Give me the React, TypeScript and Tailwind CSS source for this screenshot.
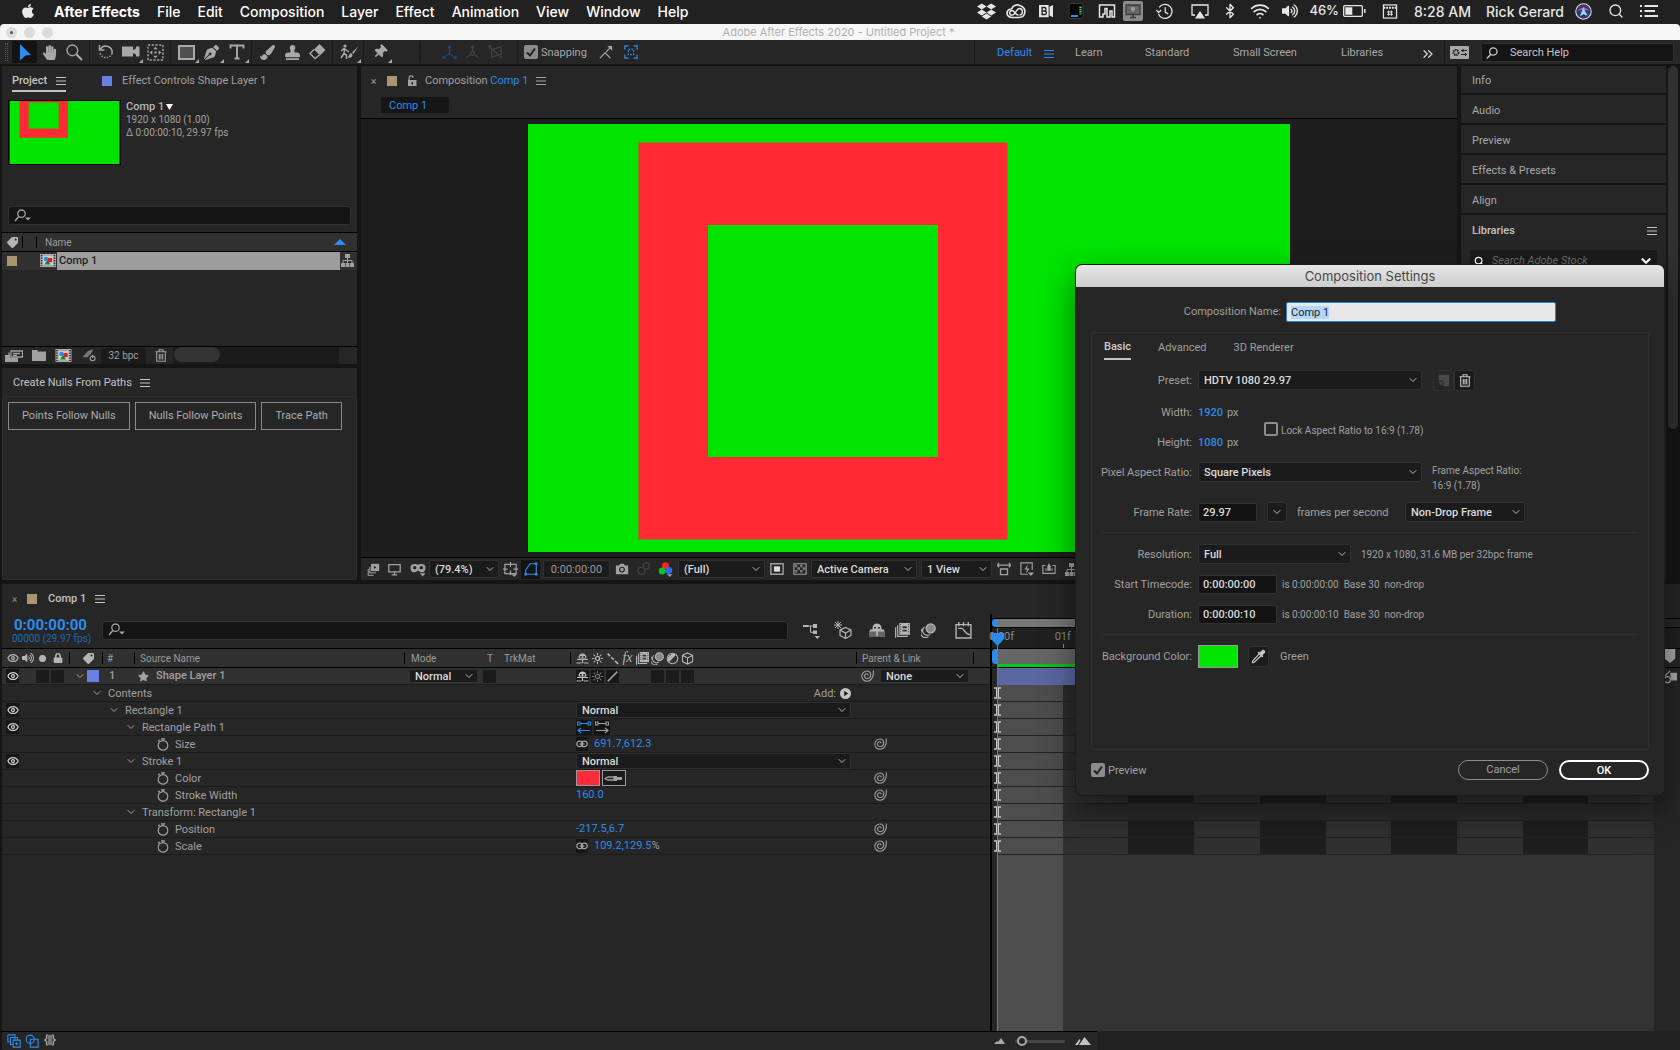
import { useEffect, useRef, type ReactNode } from "react";
import clsx from "clsx";
import { Bluetooth, ChevronDown, ChevronsRight, Eye, Search, Wifi } from "lucide-react";
import {
  FaApple,
  FaDropbox,
  FaHandPaper,
  FaLock,
  FaPaintBrush,
  FaPenNib,
  FaStamp,
  FaStar,
  FaTag,
  FaThumbtack,
  FaVolumeUp,
} from "react-icons/fa";

const UI_FONT = "font-['Roboto','Noto_Sans',sans-serif]";
const SYSTEM_FONT = "font-['Inter','Liberation_Sans',sans-serif]";

type IconProps = { className?: string };

function Icon({ className, children, box = "0 0 16 16" }: { className?: string; children: ReactNode; box?: string }) {
  return (
    <svg
      viewBox={box}
      fill="none"
      stroke="currentColor"
      strokeWidth="1.3"
      aria-hidden="true"
      className={clsx("shrink-0", className ?? "size-4")}
    >
      {children}
    </svg>
  );
}

const MenuLines = ({ className = "size-[10px]" }: IconProps) => (
  <Icon className={className} box="0 0 10 10">
    <path d="M0 1.5h10M0 5h10M0 8.5h10" strokeWidth="1.1" />
  </Icon>
);

const SearchDrop = () => (
  <Icon className="w-[18px] h-[14px]" box="0 0 18 14">
    <circle cx="7.5" cy="4.7" r="3.7" />
    <path d="M4.8 7.6 1 12" strokeWidth="1.6" />
    <path d="M11 8.5h6l-3 3z" fill="currentColor" stroke="none" />
  </Icon>
);

const SearchLeft = () => (
  <Icon className="size-3" box="0 0 12 12">
    <circle cx="7.3" cy="4.5" r="3.7" />
    <path d="M4.8 7.2 1 11.4" strokeWidth="1.5" />
  </Icon>
);

const Spiral = () => (
  <Icon className="h-3 w-[13px]" box="0 0 13 12">
    <path
      d="M12.200.5c.8 5.500-1.700 10.700-6.200 10.700C3 11.200.8 9 .8 6.200.8 3.300 3 1 5.900 1c2.400 0 3.900 1.600 3.800 3.700C9.600 7 8.200 8.500 6.300 8.500 4.700 8.500 3.600 7.500 3.600 6.100c0-1.300.9-2.300 2-2.300.9 0 1.500.6 1.300 1.600"
      strokeWidth="1.1"
    />
  </Icon>
);

const Stopwatch = () => (
  <Icon className="w-3 h-[13px]" box="0 0 12 13">
    <circle cx="6" cy="7.4" r="4.8" strokeWidth="1.2" />
    <path d="M6 2.8V1M4 .8h4M1.2 3.2l1.400-1.400" strokeWidth="1.3" />
  </Icon>
);

const Chain = () => (
  <Icon className="w-3 h-[8px]" box="0 0 12 8">
    <rect x=".8" y="1.200" width="5.800" height="5.400" rx="2.700" />
    <rect x="5.400" y="1.200" width="5.800" height="5.400" rx="2.700" />
    <path d="M3.500 4h5" strokeWidth="1.2" />
  </Icon>
);

const Shy = ({ className = "size-[13px]" }: IconProps) => (
  <Icon className={className} box="0 0 13 13">
    <path d="M2.500 6.500C2.500 3 4 1.500 6.500 1.500s4 1.500 4 5z" fill="currentColor" stroke="none" />
    <path d="M4 4h1.700v1.700H4zM7.300 4H9v1.700H7.300z" fill="#222" stroke="none" />
    <path d="M1 7.500h11M6.500 7v4M.5 11h5M7.500 11h5" strokeWidth="1.200" />
  </Icon>
);

const Sun = () => (
  <Icon className="size-[13px]" box="0 0 14 14">
    <circle cx="7" cy="7" r="2.2" />
    <path d="M7 1v2.500M7 10.500V13M1 7h2.500M10.500 7H13M2.800 2.800l1.700 1.700M9.500 9.500l1.700 1.700M11.200 2.800 9.500 4.500M4.500 9.500l-1.700 1.700" strokeWidth="1.1" />
  </Icon>
);

const Blend = ({ className = "size-[13px]" }: IconProps) => (
  <Icon className={className} box="0 0 14 14">
    <rect x="4" y="0" width="10" height="11" fill="currentColor" stroke="none" />
    <path d="M2.500 2v10.500h9.500M.6 4v9.800" strokeWidth="1.1" />
    <path d="M7 3h4v1.800H7zM7 6.200h4V8H7z" fill="#333" stroke="none" />
    <path d="M5.300 1v9M12.700 1v9" stroke="#333" strokeDasharray="1 1.200" strokeWidth=".8" />
  </Icon>
);

const MotionBlur = ({ className = "size-[13px]" }: IconProps) => (
  <Icon className={className} box="0 0 14 14">
    <circle cx="9" cy="5" r="4.200" fill="#888" />
    <path d="M3.300 3.600a4.400 4.400 0 0 0 5.400 7M1.500 5.600a4.400 4.400 0 0 0 5.400 7.200" strokeWidth="1.1" />
  </Icon>
);

const Cube = ({ className = "size-[13px]" }: IconProps) => (
  <Icon className={className} box="0 0 14 14">
    <path d="M7 1l5.500 2.700v6.600L7 13l-5.500-2.700V3.700zM1.500 3.700 7 6.500l5.500-2.800M7 6.500V13" strokeWidth="1.1" />
  </Icon>
);

const Flowchart = ({ className = "size-[13px]" }: IconProps) => (
  <Icon className={className} box="0 0 13 13">
    <path d="M4 0h5v4H4zM0 9h4v4H0zM4.600 9h3.800v4H4.600zM9 9h4v4H9z" fill="currentColor" stroke="none" />
    <path d="M6.500 4v5M2 9V6.500h9V9" strokeWidth="1" />
  </Icon>
);

const CompIcon = ({ className = "w-4 h-[13px]" }: IconProps) => (
  <Icon className={className} box="0 0 16 13">
    <rect width="16" height="13" fill="#a9a9a9" stroke="none" />
    <path d="M1.500 1v11M14.500 1v11" stroke="#222" strokeWidth="1.500" strokeDasharray="1.300 1.200" />
    <rect x="3" y="2" width="10" height="9" fill="#ccc" stroke="none" />
    <circle cx="6" cy="5" r="2.300" fill="#2d8ceb" stroke="none" />
    <rect x="8" y="4" width="4.200" height="4.200" fill="#e02020" stroke="none" />
    <path d="M4.500 10.500 7.500 6l3 4.500z" fill="#0a8a20" stroke="none" />
  </Icon>
);

const Trash = () => (
  <Icon className="w-3 h-[13px]" box="0 0 12 13">
    <path d="M.5 2.800h11M4 2.500V.8h4v1.700M1.700 3v9.300h8.600V3M4.300 5v5.500M6 5v5.500M7.700 5v5.500" strokeWidth="1.100" />
  </Icon>
);

const Padlock = () => (
  <Icon className="w-[10px] h-3" box="0 0 10 12">
    <path d="M1 5h8.500v6H1z" fill="currentColor" stroke="none" />
    <path d="M2.200 5V2.700a1.900 1.900 0 0 1 3.800 0" strokeWidth="1.300" />
    <path d="M5.200 7v2.500" stroke="#222" strokeWidth="1.500" />
  </Icon>
);

function Select({ label, value, className }: { label: string; value: string; className?: string }) {
  return (
    <span className={clsx("relative inline-flex shrink-0 text-[#dadada] font-medium", className)}>
      <select
        aria-label={label}
        className="w-full appearance-none rounded-xs border border-[#303030] bg-[#1b1b1b] pl-[5px] pr-4 leading-none outline-none"
      >
        <option>{value}</option>
      </select>
      <ChevronDown className="pointer-events-none absolute right-[3px] top-1/2 size-3 -translate-y-1/2 text-[#b8b8b8]" />
    </span>
  );
}

function CheckBox({ id, label, checked }: { id: string; label: string; checked?: boolean }) {
  return (
    <span className="flex items-center gap-[3px]">
      <span className="relative flex">
        <input
          id={id}
          type="checkbox"
          defaultChecked={checked}
          className="peer size-[14px] appearance-none rounded-xs border-2 border-[#8c8c8c] checked:bg-[#8c8c8c]"
        />
        <Icon className="pointer-events-none absolute inset-0 size-[14px] text-[#222] opacity-0 peer-checked:opacity-100" box="0 0 14 14">
          <path d="M3 7.500 6 10.500 11 3.500" strokeWidth="2" />
        </Icon>
      </span>
      <label htmlFor={id} className="pt-0.5">{label}</label>
    </span>
  );
}

const menus = ["File", "Edit", "Composition", "Layer", "Effect", "Animation", "View", "Window", "Help"];

function MenuBar() {
  return (
    <header className={clsx(SYSTEM_FONT, "flex h-6 shrink-0 items-center bg-[#212121] pb-0.5 text-[14px] font-medium text-white")}>
      <FaApple className="ml-5 size-[16px] text-[#e8e8e8]" />
      <nav className="flex items-center gap-[17px] pl-[18px]">
        <a href="#app" className="font-bold">After Effects</a>
        {menus.map((m) => (
          <a key={m} href="#menu">{m}</a>
        ))}
      </nav>
      <div className="ml-auto flex items-center text-[#e6e6e6]">
        <span className="flex w-[30px] justify-center"><FaDropbox className="size-[19px]" /></span>
        <span className="flex w-[30px] justify-center">
          <Icon className="h-[15px] w-5" box="0 0 20 15">
            <path d="M5.500 5C7 1 11 .3 14 1.500c3.500 1.300 5.200 4.200 4.800 7-.4 3-2.800 5-5.800 5H6C3 13.500 1 11.500 1 9.200 1 6.800 3 5 5.500 5" strokeWidth="1.700" />
            <path d="M12.500 11c-3.500 0-4-4.500-6.500-4.500-1.400 0-2.300 1.100-2.300 2.400S4.600 11.200 6 11.200c3.500 0 4-6.700 7.500-6.700 1.700 0 2.900 1.400 2.900 3.200S15.200 11 13.500 11" strokeWidth="1.400" />
          </Icon>
        </span>
        <span className="flex w-[30px] justify-center">
          <Icon className="h-3.5 w-4">
            <path d="M0 1h11v14H0zM12 3l4-2v14l-4-2z" fill="#e6e6e6" stroke="none" />
            <path d="M3.500 4h2.500a2 2 0 0 1 0 4H3.500zm0 4h3a2 2 0 0 1 0 4h-3z" stroke="#222" strokeWidth="1.500" />
          </Icon>
        </span>
        <span className="flex w-[30px] justify-center">
          <Icon className="size-4">
            <rect x="1" y=".5" width="14" height="15" rx="2" fill="#050505" stroke="#444" strokeWidth=".8" />
            <path d="M12.500 3.500v8" stroke="#4cd964" strokeWidth="2.200" strokeDasharray="1.500 .8" />
            <path d="M3 13h7" stroke="#2d8ceb" strokeWidth="2" />
          </Icon>
        </span>
        <span className="flex w-[32px] justify-center">
          <Icon className="h-4 w-[18px]" box="0 0 18 16">
            <path d="M5 14H1.500V2h15v12H14V8h-2v6H9V5.500H7V11H5z" strokeWidth="1.500" />
          </Icon>
        </span>
        <span className="flex w-5 justify-center rounded-xs bg-[#8b8b8b] py-0.5">
          <Icon className="size-4 text-[#3c3c3c]">
            <path d="M1 2h14v9.500H1z" fill="#666" />
            <path d="M8 11.500V14M5 14.500h6" />
            <path d="M6 4h4v3l-2 2-2-2z" fill="#999" stroke="none" />
          </Icon>
        </span>
        <span className="flex w-[42px] justify-center">
          <Icon className="size-[17px]">
            <path d="M3 4.200A6.600 6.600 0 1 1 2.200 10M.3 6.500l2 2.300L5 6.800M8.700 4v4.500l2.800 1.800" strokeWidth="1.200" />
          </Icon>
        </span>
        <span className="flex w-[30px] justify-center">
          <Icon className="h-[15px] w-[18px]" box="0 0 18 15">
            <path d="M4 11H1V1h16v10h-3" />
            <path d="M9 7l5 7.500H4z" fill="currentColor" stroke="none" />
          </Icon>
        </span>
        <span className="flex w-[30px] justify-center"><Bluetooth className="size-[16px]" /></span>
        <span className="flex w-[30px] justify-center"><Wifi className="size-[20px]" /></span>
        <span className="flex w-[30px] justify-center"><FaVolumeUp className="size-[16px]" /></span>
        <span className="ml-1 text-[13px]">46%</span>
        <Icon className="ml-1 h-3 w-[23px]" box="0 0 23 12">
          <rect x=".7" y=".7" width="18.600" height="10.600" rx="1" />
          <path d="M2.300 2.300h7v7.400h-7zM21 4h1.500v4H21z" fill="currentColor" stroke="none" />
        </Icon>
        <Icon className="ml-4 h-[15px] w-4">
          <rect x="1" y="1" width="14" height="14" />
          <path d="M1 4h14" strokeWidth="2" strokeDasharray="2 1" />
          <path d="M6.500 12.500V7M9.500 12.500V7M5 8.500h6M5 11h6" strokeWidth="1" />
        </Icon>
        <span className="ml-4">8:28 AM</span>
        <span className="ml-[15px]">Rick Gerard</span>
        <Icon className="ml-[11px] size-[17px]">
          <circle cx="8" cy="8" r="7.300" fill="#2b3a78" stroke="#ddd" strokeWidth="1" />
          <path d="M3 7.500C4 3 12 3 13 7.500 10 6 6 6 3 7.500z" fill="#e0468c" stroke="none" />
          <path d="M8 3.500 9.500 7.500 12 12 8 10.500 4.500 12.500 6.500 7.500z" fill="#8fd8f0" stroke="none" />
        </Icon>
        <Search className="ml-4 size-4" />
        <Icon className="ml-[16px] mr-[22px] h-3.5 w-[18px]" box="0 0 18 14">
          <path d="M4.500 2H18M4.500 7H15M4.500 12H18M0 2h2M0 7h2M0 12h2" strokeWidth="1.900" />
        </Icon>
      </div>
    </header>
  );
}

function TitleBar() {
  return (
    <div className={clsx(SYSTEM_FONT, "flex h-4 shrink-0 items-center rounded-t-sm bg-[#f6f6f6] px-1.5 text-[#b0b0b0]")}>
      <div className="flex gap-[7px]">
        <span className="flex size-[11px] items-center justify-center rounded-full bg-[#dcdcdc]">
          <span className="size-[3px] rounded-full bg-[#555]" />
        </span>
        <span className="size-[11px] rounded-full bg-[#dcdcdc]" />
        <span className="size-[11px] rounded-full bg-[#dcdcdc]" />
      </div>
      <h1 className="flex-1 pr-[50px] text-center text-[11px] leading-4">Adobe After Effects 2020 - Untitled Project *</h1>
    </div>
  );
}

const Corner = () => (
  <Icon className="absolute bottom-0 right-0 size-1" box="0 0 4 4">
    <path d="M4 0v4H0z" fill="currentColor" stroke="none" />
  </Icon>
);

function Tool({ label, corner, active, children }: { label: string; corner?: boolean; active?: boolean; children: ReactNode }) {
  return (
    <button
      aria-label={label}
      className={clsx("relative flex h-[22px] w-[25px] items-center justify-center", active && "rounded-xs bg-[#131313] text-[#2d8ceb]")}
    >
      {children}
      {corner && <Corner />}
    </button>
  );
}

const Sep = () => <span className="ml-[2px] mr-[3px] h-[22px] w-px bg-[#1c1c1c]" />;

function Toolbar() {
  return (
    <div className="flex h-[26px] shrink-0 items-center border-b-2 border-[#141414] bg-[#262626] text-[11px] text-[#a8a8a8]">
      <span className="ml-[5px] mr-[4px] h-[18px] w-[3px] border-x border-dotted border-[#555]" />
      <Tool label="Selection" active>
        <Icon className="h-[19px] w-3.5" box="0 0 14 19"><path d="M2 1l11 11-5.500.5L2 17.500z" fill="currentColor" stroke="none" /></Icon>
      </Tool>
      <Tool label="Hand"><FaHandPaper className="size-[15px]" /></Tool>
      <Tool label="Zoom"><Icon className="size-[17px]"><circle cx="6" cy="6" r="5" /><path d="M9.700 9.700 15 15" strokeWidth="2" /></Icon></Tool>
      <Sep />
      <Tool label="Rotation">
        <Icon className="size-4"><path d="M2.500 5A6.300 6.300 0 0 1 14 9.500" strokeWidth="1.500" /><path d="M14 9.500A6.300 6.300 0 0 1 2 9" strokeWidth="1.500" strokeDasharray="1.300 1.500" /><path d="M1.500 1v5h5" strokeWidth="1.500" /></Icon>
      </Tool>
      <Tool label="Camera" corner>
        <Icon className="h-4 w-[18px]" box="0 0 18 16"><path d="M0 2.500h11v10H0zM11 6l3-1.500v-2h3.500v10H14v-2L11 9z" fill="currentColor" stroke="none" /></Icon>
      </Tool>
      <Tool label="Pan behind">
        <Icon className="size-[17px]"><rect x="1" y="1" width="14" height="14" strokeDasharray="2 1.500" /><path d="M8 2.500 10 5H6zM8 13.500 10 11H6zM2.500 8 5 6v4zM13.500 8 11 6v4zM7 7h2v2H7z" fill="currentColor" stroke="none" /></Icon>
      </Tool>
      <Sep />
      <Tool label="Rectangle" corner><span className="h-[15px] w-[17px] border-2 border-[#a8a8a8] bg-[#505050]" /></Tool>
      <Tool label="Pen" corner><FaPenNib className="size-[15px]" /></Tool>
      <Tool label="Type" corner><Icon className="size-4"><path d="M1.500 4.500v-3h13v3M8 1.500v13M5.500 14.500h5" strokeWidth="1.900" /></Icon></Tool>
      <Sep />
      <Tool label="Brush"><FaPaintBrush className="size-[15px]" /></Tool>
      <Tool label="Clone stamp"><FaStamp className="size-[15px]" /></Tool>
      <Tool label="Eraser">
        <Icon className="h-4 w-[17px]" box="0 0 17 16"><path d="M10.500 0 16.500 6 11 11.500 5 5.500z" fill="currentColor" stroke="none" /><path d="M5 5.500 1 9.500l5 5L10.500 11" strokeWidth="1.400" /></Icon>
      </Tool>
      <Sep />
      <Tool label="Roto brush" corner>
        <Icon className="h-4 w-5" box="0 0 20 16"><circle cx="6" cy="2" r="1.600" fill="currentColor" stroke="none" /><path d="M2 7l3-2.500L8 6.500 10 8M5.500 5 5 9.500 7.500 11v4M5 9.500 2 14" strokeWidth="1.500" /><path d="M19.500 2 13 8.500l1.500 1.500zM12 9c-2 .5-1.500 3-3.500 4.500 3 .8 5.500-.5 5-3z" fill="currentColor" stroke="none" /></Icon>
      </Tool>
      <Sep />
      <Tool label="Puppet pin" corner><FaThumbtack className="size-[14px] rotate-45" /></Tool>
      <span className="ml-[27px] mr-[21px] h-[22px] w-0.5 bg-[#1c1c1c]" />
      <div className="flex items-center gap-2 text-[#444]">
        <span className="text-[#1f4a7a]"><Icon className="size-[15px]"><path d="M8 9V1M8 9 1 14M8 9l7 5M6.500 3 8 1l1.500 2M1 11.500V14h2.500M15 11.500V14h-2.500" /></Icon></span>
        <Icon className="size-[15px]"><circle cx="8" cy="9" r="2" /><path d="M8 7V1M6 10 1 14M10 10l5 4M6.500 3 8 1l1.500 2" /></Icon>
        <Icon className="size-[15px]"><path d="M1 1l14 13M1 1v3M1 1h3M14 2v8L4 13V5z" /></Icon>
      </div>
      <span className="ml-3.5 mr-[6px] h-[22px] w-px bg-[#1c1c1c]" />
      <CheckBox id="snapping" label="Snapping" checked />
      <Icon className="ml-3 size-[14px]"><path d="M1 15l6-6 6 6M8 8l5-5" /><path d="M9.500 1H15v5.500z" fill="currentColor" stroke="none" /></Icon>
      <Icon className="ml-[11px] size-[14px] text-[#2d8ceb]"><path d="M1 5V1h4M11 1h4v4M15 11v4h-4M5 15H1v-4" strokeWidth="1.500" /><rect x="5" y="5" width="6" height="6" strokeDasharray="2 1.500" /></Icon>
      <nav className="ml-auto flex h-full items-center border-l border-[#1a1a1a] pl-[22px] pt-[3px]">
        <a href="#default" className="w-[47px] text-[#2d8ceb]">Default</a>
        <span className="w-[31px] text-[#2d8ceb]"><MenuLines /></span>
        <a href="#learn" className="w-[70px]">Learn</a>
        <a href="#standard" className="w-[88px]">Standard</a>
        <a href="#small" className="w-[108px]">Small Screen</a>
        <a href="#libraries" className="w-[79px]">Libraries</a>
        <ChevronsRight className="size-4 text-[#d0d0d0]" />
      </nav>
      <span className="ml-2 h-[22px] w-px bg-[#1a1a1a]" />
      <Icon className="ml-[5px] h-[13px] w-[19px]" box="0 0 19 13">
        <rect width="19" height="13" rx="1" fill="#a8a8a8" stroke="none" />
        <circle cx="6" cy="6.500" r="2.500" stroke="#222" strokeWidth="2" strokeDasharray="1.500 .6" />
        <path d="M11 4.500h6M11 8.500h6M13 3v3M15.500 7v3" stroke="#222" strokeWidth="1.200" />
      </Icon>
      <label className="ml-[12px] mr-1.5 flex h-[19px] w-[193px] items-center gap-3 rounded-xs border border-[#303030] bg-[#141414] pl-1 pt-0.5 text-[#c4c4c4]">
        <SearchLeft />
        <input aria-label="Search Help" placeholder="Search Help" className="w-full min-w-0 bg-transparent outline-none placeholder:text-[#c4c4c4]" />
      </label>
    </div>
  );
}

function ProjectPanel() {
  return (
    <section className="flex h-[298px] flex-col bg-[#262626]">
      <div className="flex h-[26px] items-stretch pl-2.5">
        <button className="flex items-center gap-[9px] border-b-2 border-[#c4c4c4] pt-1.5 font-medium text-[#c4c4c4]">
          Project <MenuLines />
        </button>
        <button className="ml-9 flex items-center gap-[10px] pt-1">
          <span className="size-[10px] bg-[#6b7fe3]" /> Effect Controls Shape Layer 1
        </button>
      </div>
      <div className="flex gap-[5px] pl-1.5 pt-2">
        <svg viewBox="0 0 113 65" className="h-[65px] w-[113px] border border-black" aria-label="Comp 1 thumbnail">
          <rect width="113" height="65" fill="#00e400" />
          <path d="M10 0h50v38H10z" fill="#ff2a34" />
          <path d="M19.500 1.500h31v27h-31z" fill="#00e400" />
        </svg>
        <div className="text-[10px] leading-[13px]">
          <p className="flex items-center gap-0.5 text-[11px] font-medium text-[#b8b8b8]">
            Comp 1
            <Icon className="h-1.5 w-[7px] text-white" box="0 0 7 6"><path d="M0 0h7L3.500 6z" fill="currentColor" stroke="none" /></Icon>
          </p>
          <p>1920 x 1080 (1.00)</p>
          <p>Δ 0:00:00:10, 29.97 fps</p>
        </div>
      </div>
      <label className="mx-1.5 mt-[41px] flex h-[19px] items-center rounded-xs border border-[#303030] bg-[#141414] pl-[5px]">
        <SearchDrop />
        <input aria-label="Search project" className="w-full min-w-0 bg-transparent outline-none" />
      </label>
      <table className="mt-[7px] w-full table-fixed border-t border-black">
        <colgroup>
          <col className="w-[20px]" />
          <col className="w-[35px]" />
          <col />
          <col className="w-[17px]" />
        </colgroup>
        <thead className="bg-[#303030] text-[10px] text-[#9a9a9a]">
          <tr className="h-[19px] border-b border-black">
            <th className="pl-[5px]"><FaTag className="size-[11px] -scale-x-100 text-[#b5b5b5]" /></th>
            <th><span className="block h-3 w-[15px] border-x border-black" /></th>
            <th className="text-left font-normal"><span className="-ml-3">Name</span></th>
            <th><Icon className="-ml-1.5 h-1.5 w-3" box="0 0 12 6"><path d="M6 0l6 6H0z" fill="#2d8ceb" stroke="none" /></Icon></th>
          </tr>
        </thead>
        <tbody>
          <tr className="h-[18px]">
            <td className="bg-[#303030] pl-[5px]"><span className="block size-[10px] bg-[#a99572]" /></td>
            <td className="bg-[#303030] pl-[18px]"><CompIcon /></td>
            <td className="bg-[#9d9d9d] pl-0.5 pt-px font-medium text-[#222]">Comp 1</td>
            <td className="bg-[#303030] pl-px"><Flowchart /></td>
          </tr>
        </tbody>
      </table>
      <div className="mt-auto flex h-[18px] items-center border-t border-black">
        <div className="flex h-full w-[171px] items-center gap-[9px] bg-[#262626] pl-[3px]">
          <Icon className="h-3 w-[18px]" box="0 0 18 12"><path d="M6 1h11.500v6H6z" /><path d="M8 3.500h7M8 5.500h4" /><path d="M0 5h5v3.500h8V12H0z" fill="currentColor" stroke="none" /><path d="M4 2.500v6h9" /></Icon>
          <Icon className="h-[11px] w-3.5" box="0 0 14 11"><path d="M0 0h5l1 1.500h8V11H0z" fill="currentColor" stroke="none" /></Icon>
          <CompIcon className="h-[13px] w-[17px]" />
          <Icon className="h-[13px] w-4"><path d="M0 10C5 3 9 0 13 1c-1 3-3 6-7 9zM1 13l4-3" fill="#777" stroke="none" /><circle cx="12.500" cy="11.500" r="3" /><path d="M12.500 7v4" /></Icon>
          <button className="-ml-[5px] h-4 w-[45px] rounded-xs bg-[#1b1b1b] text-[10px]">32 bpc</button>
          <Trash />
        </div>
        <div className="mr-[18px] h-full flex-1 bg-[#1b1b1b]">
          <span className="ml-px block h-[15px] w-[46px] rounded-full bg-[#343434]" />
        </div>
      </div>
    </section>
  );
}

function NullsPanel() {
  return (
    <section className="flex flex-1 flex-col bg-[#262626]">
      <h2 className="flex h-7 items-center gap-2 pl-[11px] pt-0.5 text-[#c4c4c4]">
        Create Nulls From Paths <MenuLines />
      </h2>
      <div className="flex flex-1 gap-[5px] rounded-sm border border-[#2f2f2f] px-[5px] pt-[5px]">
        {["Points Follow Nulls", "Nulls Follow Points", "Trace Path"].map((label) => (
          <button key={label} className="h-7 border border-[#8a8a8a] px-[13px] pt-px text-[#acacac]">{label}</button>
        ))}
      </div>
    </section>
  );
}

function CompositionPanel() {
  return (
    <section className="flex min-w-0 flex-1 flex-col bg-[#262626]">
      <div className="flex h-[28px] items-center pl-[10px] pt-0.5">
        <button aria-label="Close composition" className="w-4 text-left text-[10px]">×</button>
        <span className="size-[10px] bg-[#a99572]" />
        <span className="ml-[10px] mr-2"><Padlock /></span>
        <h2>Composition <span className="text-[#2d8ceb]">Comp 1</span></h2>
        <span className="ml-2"><MenuLines /></span>
      </div>
      <div className="h-[25px] border-b border-black pl-5 pt-[3px]">
        <button className="flex h-4 w-[68px] items-center rounded-xs bg-[#161616] pl-2 pt-0.5 text-[#2d8ceb]">Comp 1</button>
      </div>
      <div className="flex flex-1 justify-center bg-[#1d1d1d] py-[5px]">
        <svg viewBox="0 0 762 428" className="w-[762px] max-w-full" aria-label="Composition view">
          <rect width="762" height="428" fill="#00e400" />
          <path d="M110.500 18.500h369v397h-369zM180 101v232h230V101z" fill="#ff2a34" fillRule="evenodd" />
        </svg>
      </div>
      <div className="flex h-[23px] items-center overflow-hidden border-t border-black pl-1.5">
        <span className="flex w-[21px]"><Icon className="size-[13px]"><path d="M3.500 5v7H11M1.500 7.500V15H8" /><path d="M5 1h10v9H5z" fill="currentColor" stroke="none" /><path d="M8.500 3.500v4l3-2z" fill="#222" stroke="none" /></Icon></span>
        <span className="flex w-[22px]"><Icon className="size-[13px]"><path d="M1 2h14v9H1zM8 11v3M4.500 14.500h7" strokeWidth="1.600" /></Icon></span>
        <span className="flex w-[19px]"><Icon className="h-[15px] w-4"><path d="M0 6c0-5 6-4 8-3 2-1 8-2 8 3 0 6-5 6-8 3-3 3-8 3-8-3z" fill="currentColor" stroke="none" /><circle cx="4.500" cy="6" r="1.800" fill="#222" stroke="none" /><circle cx="11.500" cy="6" r="1.800" fill="#222" stroke="none" /><path d="M10 12h6l-3 3.500z" fill="currentColor" stroke="none" /></Icon></span>
        <Select label="Magnification" value="(79.4%)" className="h-[18px] w-[70px]" />
        <span className="flex w-[22px] justify-center"><Icon className="size-[15px]"><path d="M2 2.500h12v10H2zM8 0v5M8 9v5M0 7.500h5M11 7.500h5" /><path d="M9 13h6l-3 3z" fill="currentColor" stroke="none" /></Icon></span>
        <span className="mr-[3px] flex h-[19px] w-[19px] items-center justify-center bg-[#141414] text-[#2d8ceb]"><Icon className="size-[14px]"><path d="M2 14V9L7 2h7v12z" /><path d="M.5 12.500h3v3h-3zM12.500 12.500h3v3h-3zM12.500.5h3v3h-3z" fill="currentColor" stroke="none" /></Icon></span>
        <button className="h-[18px] w-[67px] rounded-xs border border-[#303030] bg-[#1b1b1b] pt-px text-[#9a9a9a]">0:00:00:00</button>
        <span className="flex w-[23px] justify-center"><Icon className="size-[14px]"><path d="M1 4h3.500L6 2h4l1.500 2H15v10H1z" fill="currentColor" stroke="none" /><circle cx="8" cy="8.700" r="2.700" stroke="#222" /></Icon></span>
        <span className="flex w-[21px] justify-center text-[#444]"><Icon className="size-[14px]"><circle cx="10.500" cy="4.500" r="3.500" /><circle cx="5" cy="10" r="4" /></Icon></span>
        <span className="flex w-[23px] justify-center"><Icon className="size-[15px]"><circle cx="8" cy="4" r="3.700" fill="#ff2020" stroke="none" /><circle cx="4.500" cy="9.500" r="3.700" fill="#10c020" stroke="none" /><circle cx="11.500" cy="9" r="3.700" fill="#2d6cf0" stroke="none" /><path d="M9.500 13h6l-3 3z" fill="currentColor" stroke="none" /></Icon></span>
        <Select label="Resolution" value="(Full)" className="ml-px h-[18px] w-[87px]" />
        <span className="flex w-[23px] justify-center"><Icon className="size-[14px]"><path d="M1 2h14v12H1z" strokeWidth="1.600" /><path d="M4.500 5h7v6h-7z" fill="#ddd" stroke="none" /></Icon></span>
        <span className="flex w-[23px] justify-center"><Icon className="size-[14px]"><path d="M1 2h14v12H1z" /><path d="M2 3h3v3H2zM8 3h3v3H8zM5 6h3v3H5zM11 6h3v3h-3zM2 9h3v3H2zM8 9h3v3H8z" fill="#777" stroke="none" /></Icon></span>
        <Select label="3D view" value="Active Camera" className="h-[18px] w-[106px]" />
        <Select label="View layout" value="1 View" className="ml-1 h-[18px] w-[71px]" />
        <span className="flex w-[24px] justify-center"><Icon className="size-[14px]"><path d="M0 3.500h16M2.500 1 0 3.500 2.500 6M13.500 1 16 3.500 13.500 6M4 8h8v6.500H4z" strokeWidth="1.500" /></Icon></span>
        <span className="flex w-[22px] justify-center"><Icon className="size-[14px]"><path d="M9 14H1V1h13v8" /><path d="M9 3 5 8.500h3L7 13l4-5.500H8zM9 12h7l-3.500 4z" fill="currentColor" stroke="none" /></Icon></span>
        <span className="flex w-[22px] justify-center"><Icon className="size-[14px]"><path d="M4 4H1v9h14V4h-3M4.500 10V7M11.500 10V7" /><path d="M6 5l2-4 2 4v5H6z" fill="currentColor" stroke="none" /></Icon></span>
        <span className="flex w-[22px] justify-center"><Flowchart /></span>
      </div>
    </section>
  );
}

function SidePanels() {
  return (
    <aside className="flex w-[205px] shrink-0 flex-col bg-[#262626] text-[#a8a8a8]">
      {["Info", "Audio", "Preview", "Effects & Presets", "Align"].map((name, i) => (
        <button key={name} className={clsx("border-b-2 border-[#151515] pl-[11px] pt-1 text-left", i === 0 ? "h-[29px]" : "h-[30px]")}>
          {name}
        </button>
      ))}
      <div className="flex h-[30px] items-center justify-between pl-[11px] pr-[9px] pt-0.5 font-medium text-[#c4c4c4]">
        Libraries <MenuLines />
      </div>
      <label className="mx-[9px] mt-[5px] flex h-[22px] items-center gap-2 bg-[#1b1b1b] px-1">
        <Search className="size-[10px] shrink-0 stroke-3 text-white" />
        <input aria-label="Search Adobe Stock" placeholder="Search Adobe Stock" className="w-full min-w-0 bg-transparent italic outline-none placeholder:text-[#6e6e6e]" />
        <ChevronDown className="size-[14px] shrink-0 stroke-4 text-white" />
      </label>
    </aside>
  );
}

type Row = {
  name: string;
  indent: string;
  eye?: boolean;
  prop?: boolean;
  link?: boolean;
  value?: ReactNode;
};

const Blue = ({ children }: { children: ReactNode }) => <span className="text-[#2d8ceb]">{children}</span>;

const blendSelect = (label: string) => <Select label={label} value="Normal" className="h-4 w-[275px]" />;

const rows: Row[] = [
  {
    name: "Contents",
    indent: "pl-[21px]",
    value: (
      <button className="ml-auto mr-1.5 flex items-center gap-1">
        <span className="pt-0.5">Add:</span>
        <Icon className="size-[11px]" box="0 0 12 12">
          <circle cx="6" cy="6" r="6" fill="#c4c4c4" stroke="none" />
          <path d="M4.500 3v6L9 6z" fill="#222" stroke="none" />
        </Icon>
      </button>
    ),
  },
  { name: "Rectangle 1", indent: "pl-[38px]", eye: true, value: blendSelect("Rectangle blend mode") },
  {
    name: "Rectangle Path 1",
    indent: "pl-[55px]",
    eye: true,
    value: (
      <span className="flex gap-0.5">
        <span className="bg-[#141414] p-px text-[#2d8ceb]">
          <Icon className="h-[13px] w-3.5" box="0 0 14 13"><path d="M3 2.500h8M.5 1h2.500v3H.5zM11 1h2.500v3H11zM1 9.500h12M4 7 1 9.500 4 12" strokeWidth="1.100" /></Icon>
        </span>
        <span className="bg-[#141414] p-px">
          <Icon className="h-[13px] w-3.5" box="0 0 14 13"><path d="M3 2.500h8M.5 1h2.500v3H.5zM11 1h2.500v3H11zM1 9.500h12M10 7l3 2.500-3 2.500" strokeWidth="1.100" /></Icon>
        </span>
      </span>
    ),
  },
  { name: "Size", indent: "pl-[87px]", prop: true, link: true, value: <Blue>691.7,612.3</Blue> },
  { name: "Stroke 1", indent: "pl-[55px]", eye: true, value: blendSelect("Stroke blend mode") },
  {
    name: "Color",
    indent: "pl-[87px]",
    prop: true,
    value: (
      <span className="flex gap-0.5">
        <button aria-label="Stroke color" className="h-4 w-6 border border-[#9a9a9a] bg-[#ff2a3c]" />
        <button aria-label="Eyedropper" className="flex h-4 w-6 items-center justify-center border border-[#9a9a9a] bg-[#1b1b1b]">
          <Icon className="h-[7px] w-5" box="0 0 20 7"><path d="M1 3.500 4 2h6v3H4z" /><path d="M10 1h3v1h5v3h-5v1h-3z" fill="currentColor" stroke="none" /></Icon>
        </button>
      </span>
    ),
  },
  { name: "Stroke Width", indent: "pl-[87px]", prop: true, value: <Blue>160.0</Blue> },
  { name: "Transform: Rectangle 1", indent: "pl-[55px]" },
  { name: "Position", indent: "pl-[87px]", prop: true, value: <Blue>-217.5,6.7</Blue> },
  { name: "Scale", indent: "pl-[87px]", prop: true, link: true, value: <span><Blue>109.2,129.5</Blue>%</span> },
];

const EyeBox = () => (
  <button aria-label="Toggle visibility" className="flex h-[14px] w-[13px] items-center justify-center bg-[#171717]">
    <Eye className="size-3 stroke-[2.5] text-[#cfcfcf]" />
  </button>
);

const Slot = () => <span className="h-[13px] w-[13px] bg-[#1b1b1b]" />;

const HSep = () => <span className="ml-auto h-3 w-px shrink-0 bg-black" />;

function LayerColumns() {
  return (
    <div className="flex h-[19px] items-center border-b border-black bg-[#303030] text-[10px] text-[#9a9a9a]">
      <div className="flex w-[68px] items-center pl-[3px] text-[#b5b5b5]">
        <span className="flex w-[15px] justify-center"><Eye className="size-3 stroke-[2.5]" /></span>
        <span className="flex w-[15px] justify-center"><FaVolumeUp className="size-3" /></span>
        <span className="flex w-[15px] justify-center"><span className="size-[7px] rounded-full bg-[#b5b5b5]" /></span>
        <span className="flex w-[15px] justify-center"><FaLock className="size-[10px]" /></span>
        <HSep />
      </div>
      <div className="flex w-[33px] items-center pl-[13px]"><FaTag className="size-[11px] -scale-x-100 text-[#b5b5b5]" /><HSep /></div>
      <div className="flex w-[32px] items-center pl-1">#<HSep /></div>
      <div className="flex flex-1 items-center pl-[5px]">Source Name<HSep /></div>
      <div className="flex w-[166px] items-center pl-1.5"><span className="w-[76px]">Mode</span><span className="w-[17px]">T</span>TrkMat<HSep /></div>
      <div className="flex w-[286px] items-center gap-0.5 pl-[5px] text-[#b5b5b5]">
        <Shy /><Sun />
        <Icon className="size-[13px]"><path d="M2 2l3 3M6.500 6.500l3 3M11 11l4 3.500" strokeWidth="2" /></Icon>
        <i className="w-[13px] text-center font-['Liberation_Serif',serif] text-[14px] leading-3">fx</i>
        <Blend /><MotionBlur />
        <Icon className="size-[13px]"><circle cx="8" cy="8" r="6.500" /><path d="M12.500 3.500a6.500 6.500 0 0 1-9 9z" fill="currentColor" stroke="none" transform="rotate(180 8 8)" /></Icon>
        <Cube />
        <HSep />
      </div>
      <div className="flex w-[117px] items-center pl-[5px]">Parent &amp; Link<HSep /></div>
      <div className="w-4" />
    </div>
  );
}

function LayerRow() {
  return (
    <div className="flex h-[17px] items-center border-b border-[#1c1c1c] bg-[#303030]">
      <div className="flex w-[68px] items-center gap-0.5 pl-1"><EyeBox /><span className="w-[13px]" /><Slot /><Slot /></div>
      <div className="flex w-[33px] items-center gap-px pl-1"><ChevronDown className="size-3" /><span className="size-3 bg-[#6b7fe3]" /></div>
      <div className="w-[32px] pl-1.5 pt-px font-medium">1</div>
      <div className="flex flex-1 items-center gap-[7px] pl-[3px] pt-px font-medium"><FaStar className="size-[11px]" />Shape Layer 1</div>
      <div className="flex w-[166px] items-center gap-[5px] pl-1"><Select label="Layer mode" value="Normal" className="h-[14px] w-[69px]" /><Slot /></div>
      <div className="flex w-[286px] items-center gap-0.5 pl-[5px]">
        <span className="bg-[#171717] text-[#c4c4c4]"><Shy /></span>
        <span className="bg-[#171717] text-[#777]"><Sun /></span>
        <span className="bg-[#171717]"><Icon className="size-[13px]"><path d="M2 14 14 2" strokeWidth="1.800" /></Icon></span>
        <span className="w-7" />
        <Slot /><Slot /><Slot />
      </div>
      <div className="flex w-[133px] items-center gap-1.5 pl-[4px]"><Spiral /><Select label="Parent" value="None" className="h-[14px] w-[89px]" /></div>
    </div>
  );
}

function PropertyRow({ row }: { row: Row }) {
  return (
    <div className="flex h-[17px] items-center border-b border-[#1c1c1c]">
      <div className="w-[68px] pl-1">{row.eye && <EyeBox />}</div>
      <div className={clsx("flex flex-1 items-center", row.prop ? "gap-1.5" : "gap-[5px]", row.indent)}>
        {row.prop ? <Stopwatch /> : <ChevronDown className="size-3" />}
        <span className="pt-0.5">{row.name}</span>
      </div>
      <div className="flex w-[286px] items-center gap-1.5 pl-[5px]">
        {row.link && <span className="bg-[#171717] py-[3px]"><Chain /></span>}
        {row.value}
      </div>
      <div className="w-[133px] pl-[17px]">{row.prop && <Spiral />}</div>
    </div>
  );
}

const frames = Array.from({ length: 10 }, (_, i) => i);

function Tracks() {
  return (
    <div className="relative flex min-w-0 flex-1 flex-col border-l-2 border-black bg-[#262626]">
      <div className="mt-[4px] flex h-[10px] border-y border-black">
        <span className="w-1.5 rounded-l-full bg-[#2d8ceb]" />
        <span className="mr-[26px] flex-1 bg-[#777]" />
      </div>
      <div className="flex h-[20px] bg-[#202020] pr-[26px] text-[11px] text-[#8a8a8a]">
        <span className="w-[5px]" />
        <div className="grid flex-1 grid-cols-10">
          {frames.map((f) => (
            <span key={f} className="relative -ml-2 leading-[18px]">
              {f === 0 ? "0:00f" : `0${f}f`}
              {f > 0 && <span className="absolute bottom-0 left-2 h-1 w-px bg-[#8a8a8a]" />}
            </span>
          ))}
        </div>
      </div>
      <div className="flex h-[16px] border-t border-black">
        <span className="w-[5px] rounded-l-sm bg-[#2d8ceb]" />
        <span className="flex-1 bg-[#666]" />
        <span className="flex w-[26px] justify-end pr-[3px]">
          <Icon className="size-3.5 text-[#a8a8a8]"><path d="M2 0h12v11l-6 5-6-5z" fill="currentColor" stroke="none" /></Icon>
        </span>
      </div>
      <div className="ml-[5px] mr-[26px] h-[3px] bg-[#00c814]" />
      <div className="flex h-[18px] border-t border-black">
        <div className="ml-[5px] flex-1 bg-[#5b67a0]" />
        <span className="flex w-[26px] justify-end pr-[3px] pt-0.5">
          <Icon className="size-3.5 text-[#a8a8a8]"><circle cx="5" cy="11" r="3.500" /><path d="M1 8 8 1" /><path d="M8 3h8v9H9.500z" fill="currentColor" stroke="none" /></Icon>
        </span>
      </div>
      <div className="mr-[19px] flex flex-1 flex-col pr-[7px]">
        {rows.map((row) => (
          <div key={row.name} className="ml-[5px] flex h-[17px] border-b border-[#222]">
            {frames.map((f) => (
              <span
                key={f}
                className={clsx(
                  "relative flex-1",
                  f === 0 ? "bg-[#4d4d4d]" : row.prop ? (f % 2 === 0 ? "bg-[#1e1e1e]" : "bg-[#303030]") : "bg-[#2b2b2b]",
                )}
              >
                {f === 0 && (
                  <Icon className="absolute -left-[3px] top-0.5 z-10 h-3 w-[7px] text-[#c8c8c8]" box="0 0 7 12">
                    <path d="M0 1h7M0 11h7" strokeWidth="1.600" />
                    <path d="M3.500 1v10" strokeWidth="3" />
                  </Icon>
                )}
              </span>
            ))}
          </div>
        ))}
        <div className="ml-[5px] flex flex-1">
          <span className="w-1/10 bg-[#4d4d4d]" />
          <span className="flex-1 bg-[#333]" />
        </div>
      </div>
      {/* current time indicator */}
      <div className="absolute bottom-0 left-[5px] top-[14px] z-20 w-px bg-[#2d8ceb]">
        <Icon className="absolute -left-1.5 top-1 h-[15px] w-[13px] text-[#2d8ceb]" box="0 0 13 15">
          <path d="M0 1h13v6l-6.500 7L0 7z" fill="currentColor" stroke="none" />
        </Icon>
      </div>
    </div>
  );
}

function Timeline() {
  return (
    <section className="flex flex-1 flex-col bg-[#262626]">
      <div className="flex h-[30px] items-center pl-[10px] text-[#c4c4c4]">
        <button aria-label="Close timeline" className="w-[15px] text-left text-[10px] text-[#8a8a8a]">×</button>
        <span className="size-[10px] bg-[#a99572]" />
        <h2 className="ml-[11px] mr-[9px] pt-px font-medium">Comp 1</h2>
        <MenuLines />
      </div>
      <div className="flex flex-1">
        <div className="flex w-[988px] shrink-0 flex-col">
          <div className="flex h-[35px] items-center border-b border-black">
            <div className="w-[100px] pl-[10px] text-[#2d8ceb]">
              <p className="pl-0.5 text-[15px] font-bold leading-4">0:00:00:00</p>
              <p className="text-[10px] leading-3 text-[#1c69b4]">00000 (29.97 fps)</p>
            </div>
            <label className="-mt-0.5 flex h-[19px] flex-1 items-center rounded-xs border border-[#303030] bg-[#141414] pl-[5px]">
              <SearchDrop />
              <input aria-label="Search timeline" className="w-full min-w-0 bg-transparent outline-none" />
            </label>
            <div className="-mt-0.5 flex w-[202px] items-center pl-[15px] text-[#b5b5b5]">
              <Icon className="size-[17px]" box="0 0 17 17">
                <path d="M0 3h5.500v2H0zM10 2h4v4h-4zM10 8.500h4v3.500h-4z" fill="currentColor" stroke="none" />
                <path d="M5 4h5M7.500 4v6.300H10" strokeWidth="1" />
                <path d="M11.500 14H17l-2.700 3z" fill="currentColor" stroke="none" />
              </Icon>
              <Icon className="ml-[14px] size-[18px]" box="0 0 18 18"><path d="M4 0v8M0 4h8M1 1l6 6M7 1 1 7" strokeWidth="1" /><path d="M11.500 6.500l5.500 2.500v5.500l-5.500 3L6 14.500V9zM6 9l5.500 3L17 9M11.500 12v5" strokeWidth="1.200" /></Icon>
              <Icon className="ml-[17px] size-4"><path d="M0 8.500h16V15H0z" fill="#666" stroke="none" /><path d="M3.500 8V6a4.500 4.500 0 0 1 9 0v2z" fill="currentColor" stroke="none" /><path d="M8 3v11M1 8.500h14" strokeWidth="1.800" /><path d="M5 5h2v1.500H5zM9 5h2v1.500H9z" fill="#333" stroke="none" /></Icon>
              <Blend className="ml-[10px] size-[15px]" />
              <MotionBlur className="ml-[11px] size-[15px]" />
              <Icon className="ml-[19px] size-[17px]"><path d="M1 2.500h14V15H1zM3.500 0v4M8 0v4M12.500 0v4" /><path d="M3 6h3c3 0 3 6 8 6" /></Icon>
            </div>
          </div>
          <LayerColumns />
          <LayerRow />
          {rows.map((row) => (
            <PropertyRow key={row.name} row={row} />
          ))}
        </div>
        <Tracks />
      </div>
      <div className="flex h-[19px]">
        <div className="flex w-[1095px] shrink-0 items-center border-t border-black">
          <div className="flex w-[990px] gap-1 pl-[5px] text-[#2d8ceb]">
            <Icon className="size-3.5"><path d="M1 1h8v7M1 1v8h2M4 4h8v3M4 4v8h2M7 7h8v8H7z" /><path d="M11 9.500v3M9.500 11h3" /></Icon>
            <Icon className="size-3.5"><circle cx="6" cy="6" r="4.700" /><path d="M6 6h9v9H6z" /></Icon>
            <Icon className="h-3 w-3.5 text-[#a8a8a8]"><path d="M5 1.500H3.500v4.500L1 8l2.500 2v4.500H5M11 1.500h1.500v4.500L15 8l-2.500 2v4.500H11" strokeWidth="1.800" /><path d="M5 1h6v14H5z" fill="#777" stroke="none" /></Icon>
          </div>
          <Icon className="ml-0.5 h-1.5 w-[11px] text-[#a8a8a8]" box="0 0 11 6"><path d="M0 6l3-3 1 1 3-4 4 6z" fill="currentColor" stroke="none" /></Icon>
          <span className="relative ml-2.5 flex h-3 w-[50px] items-center">
            <span className="h-[3px] w-full bg-[#444]" />
            <input aria-label="Timeline zoom" type="range" defaultValue={0} className="absolute inset-0 w-full opacity-0" />
            <span className="pointer-events-none absolute left-0.5 size-[10px] rounded-full border-2 border-[#a8a8a8] bg-[#262626]" />
          </span>
          <Icon className="ml-2.5 h-2 w-4 text-[#c4c4c4]" box="0 0 16 8"><path d="M0 8l4.500-6 1 1L3 8zM4 8l5.500-8L16 8z" fill="currentColor" stroke="none" /></Icon>
        </div>
        <div className="flex-1 bg-[#222]" />
      </div>
    </section>
  );
}

function FormRow({ label, htmlFor, children }: { label: string; htmlFor?: string; children: ReactNode }) {
  return (
    <div className="flex h-[30px] items-center">
      <label htmlFor={htmlFor} className="w-[100px] shrink-0 pt-0.5 text-right">{label}</label>
      <div className="flex items-center pl-1.5">{children}</div>
    </div>
  );
}

const fieldClass = "h-[19px] rounded-xs border border-[#303030] bg-[#131313] px-1 font-medium text-[#dadada] outline-none";

function CompositionSettings() {
  const nameRef = useRef<HTMLInputElement>(null);

  useEffect(() => {
    nameRef.current?.focus();
    nameRef.current?.select();
  }, []);

  return (
    <div
      role="dialog"
      aria-labelledby="dialog-title"
      className="absolute right-4 top-[265px] w-[588px] rounded-md bg-[#262626] text-[#a0a0a0] shadow-[0_14px_32px_4px_rgba(0,0,0,0.4)] ring-1 ring-[#1c1c1c]"
    >
      <h2
        id="dialog-title"
        className={clsx(SYSTEM_FONT, "h-[22px] rounded-t-md bg-linear-to-b from-[#e6e6e6] to-[#cecece] text-center text-[13px] leading-[23px] text-[#484848]")}
      >
        Composition Settings
      </h2>
      <div className="flex items-center px-4 pt-[15px]">
        <label htmlFor="comp-name" className="w-[194px] pr-[5px] pt-px text-right">Composition Name:</label>
        <input
          ref={nameRef}
          id="comp-name"
          defaultValue="Comp 1"
          className="h-5 w-[270px] rounded-xs border border-[#2d7fe0] bg-[#e8e8e8] px-1 text-[#222] outline-none selection:bg-[#b3d7ff] selection:text-[#222]"
        />
      </div>
      <div className="mx-[15px] mt-[10px] h-[418px] rounded-xs border border-[#303030]">
        <div className="flex h-8 items-start gap-[27px] pl-3 pt-[5px]">
          <button className="h-[22px] border-b-2 border-[#c4c4c4] pb-0.5 font-medium text-[#d0d0d0]">Basic</button>
          <button className="h-[20px]">Advanced</button>
          <button className="h-[20px]">3D Renderer</button>
        </div>
        <FormRow label="Preset:">
          <Select label="Preset" value="HDTV 1080 29.97" className="h-5 w-[224px]" />
          <button aria-label="Save preset" className="ml-[11px] flex h-[21px] w-[21px] items-center justify-center rounded-xs border border-[#303030] text-[#4a4a4a]">
            <Icon className="size-[13px]"><path d="M2 1h13v14H8V8H2z" fill="currentColor" stroke="none" /><path d="M1.500 9.500 6.500 15V9.500z" fill="currentColor" stroke="none" /></Icon>
          </button>
          <button aria-label="Delete preset" className="flex h-[21px] w-[21px] items-center justify-center rounded-xs border border-[#303030] bg-[#1b1b1b] text-[#c4c4c4]">
            <Trash />
          </button>
        </FormRow>
        <div className="mt-0.5 flex items-center">
          <div className="w-[172px]">
            <FormRow label="Width:"><span className="pt-0.5 font-medium text-[#2d8ceb]">1920</span><span className="pl-1 pt-0.5">px</span></FormRow>
            <FormRow label="Height:"><span className="pt-0.5 font-medium text-[#2d8ceb]">1080</span><span className="pl-1 pt-0.5">px</span></FormRow>
          </div>
          <div className="pt-1 text-[10px]"><CheckBox id="lock-aspect" label="Lock Aspect Ratio to 16:9 (1.78)" /></div>
        </div>
        <FormRow label="Pixel Aspect Ratio:">
          <Select label="Pixel Aspect Ratio" value="Square Pixels" className="h-5 w-[224px]" />
          <p className="pl-[10px] pt-3 text-[10px] leading-[15px]">Frame Aspect Ratio:<br />16:9 (1.78)</p>
        </FormRow>
        <div className="mt-[10px]">
          <FormRow label="Frame Rate:" htmlFor="frame-rate">
            <input id="frame-rate" defaultValue="29.97" className={clsx(fieldClass, "w-[59px]")} />
            <button aria-label="Frame rate presets" className="ml-[10px] flex h-5 w-5 items-center justify-center rounded-xs border border-[#303030] bg-[#1b1b1b]">
              <ChevronDown className="size-3 text-[#c4c4c4]" />
            </button>
            <span className="w-[118px] pl-[10px] pt-0.5">frames per second</span>
            <Select label="Drop frame" value="Non-Drop Frame" className="h-5 w-[120px]" />
          </FormRow>
        </div>
        <hr className="mx-[10px] mb-[6px] mt-[5px] border-[#303030]" />
        <FormRow label="Resolution:">
          <Select label="Resolution" value="Full" className="h-5 w-[153px]" />
          <span className="pl-[10px] pt-px text-[10px]">1920 x 1080, 31.6 MB per 32bpc frame</span>
        </FormRow>
        <FormRow label="Start Timecode:" htmlFor="start-timecode">
          <input id="start-timecode" defaultValue="0:00:00:00" className={clsx(fieldClass, "w-[79px]")} />
          <span className="whitespace-pre pl-[5px] pt-px text-[10px]">{"is 0:00:00:00  Base 30  non-drop"}</span>
        </FormRow>
        <FormRow label="Duration:" htmlFor="duration">
          <input id="duration" defaultValue="0:00:00:10" className={clsx(fieldClass, "w-[79px]")} />
          <span className="whitespace-pre pl-[5px] pt-px text-[10px]">{"is 0:00:00:10  Base 30  non-drop"}</span>
        </FormRow>
        <hr className="mx-[10px] mb-[6px] mt-[5px] border-[#303030]" />
        <FormRow label="Background Color:">
          <button aria-label="Background color" className="h-[23px] w-[40px] border border-[#9a9a9a] bg-[#00e400]" />
          <button aria-label="Pick color" className="ml-[10px] flex h-[21px] w-[21px] items-center justify-center rounded-xs border border-[#303030] bg-[#1b1b1b] text-[#c4c4c4]">
            <Icon className="size-[15px]"><path d="M9 5 2 12.500 1.500 14.500l2-.5L11 7" /><path d="M8 3l1.500.5L12 1c1.500-1 4 1 3 3l-2.500 2.500.5 1.500-1 1-5-5z" fill="currentColor" stroke="none" /></Icon>
          </button>
          <span className="pl-[11px] pt-0.5">Green</span>
        </FormRow>
      </div>
      <div className="flex items-center gap-[11px] px-[15px] pb-[15px] pt-[10px]">
        <div className="flex-1"><CheckBox id="preview" label="Preview" checked /></div>
        <button className="h-5 w-[90px] rounded-full border border-[#8c8c8c]">Cancel</button>
        <button className="h-5 w-[90px] rounded-full border-2 border-white font-medium leading-none text-white">OK</button>
      </div>
    </div>
  );
}

export default function App() {
  return (
    <div className={clsx(UI_FONT, "relative isolate flex min-h-screen flex-col overflow-hidden bg-[#151515] text-[11px] text-[#a0a0a0]")}>
      <MenuBar />
      <TitleBar />
      <Toolbar />
      <main className="relative -z-10 flex flex-1 flex-col gap-1 pl-0.5">
        <div className="flex gap-1">
          <div className="flex w-[355px] shrink-0 flex-col gap-1">
            <ProjectPanel />
            <NullsPanel />
          </div>
          <CompositionPanel />
          <SidePanels />
          <div className="-ml-0.5 w-3 shrink-0">
            <div className="h-[363px] w-[10px] rounded-full bg-[#303030]" />
          </div>
        </div>
        <Timeline />
      </main>
      <CompositionSettings />
    </div>
  );
}
